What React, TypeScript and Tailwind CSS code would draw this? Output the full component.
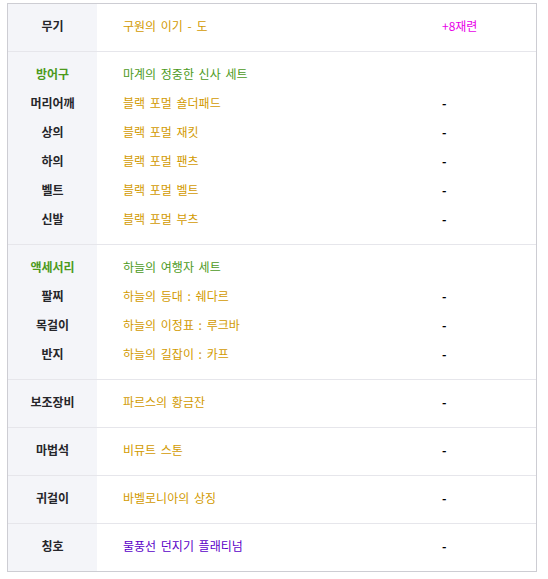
const GOLD = 'text-[#d29a00]';
const GREEN = 'text-[#4c9a1c]';

type Line = { label: string; labelClass?: string; item: string; itemClass: string; extra?: string; extraClass?: string };

const groups: Line[][] = [
  [{ label: '무기', item: '구원의 이기 - 도', itemClass: GOLD, extra: '+8재련', extraClass: 'text-[#e800e8]' }],
  [
    { label: '방어구', labelClass: GREEN, item: '마계의 정중한 신사 세트', itemClass: GREEN },
    { label: '머리어깨', item: '블랙 포멀 숄더패드', itemClass: GOLD, extra: '-' },
    { label: '상의', item: '블랙 포멀 재킷', itemClass: GOLD, extra: '-' },
    { label: '하의', item: '블랙 포멀 팬츠', itemClass: GOLD, extra: '-' },
    { label: '벨트', item: '블랙 포멀 벨트', itemClass: GOLD, extra: '-' },
    { label: '신발', item: '블랙 포멀 부츠', itemClass: GOLD, extra: '-' },
  ],
  [
    { label: '액세서리', labelClass: GREEN, item: '하늘의 여행자 세트', itemClass: GREEN },
    { label: '팔찌', item: '하늘의 등대 : 쉐다르', itemClass: GOLD, extra: '-' },
    { label: '목걸이', item: '하늘의 이정표 : 루크바', itemClass: GOLD, extra: '-' },
    { label: '반지', item: '하늘의 길잡이 : 카프', itemClass: GOLD, extra: '-' },
  ],
  [{ label: '보조장비', item: '파르스의 황금잔', itemClass: GOLD, extra: '-' }],
  [{ label: '마법석', item: '비뮤트 스톤', itemClass: GOLD, extra: '-' }],
  [{ label: '귀걸이', item: '바벨로니아의 상징', itemClass: GOLD, extra: '-' }],
  [{ label: '칭호', item: '물풍선 던지기 플래티넘', itemClass: 'text-[#5a00c8]', extra: '-' }],
];

export default function App() {
  return (
    <div className="bg-white min-h-screen pl-[7px] pt-[3px] text-[12px] leading-[29px] [font-family:'Noto_Sans_CJK_KR','Noto_Sans',sans-serif] [word-spacing:2px]">
      <div className="w-[530px] border border-[#cdcdd3]">
        {groups.map((g, gi) => (
          <div key={gi} className={`flex ${gi < groups.length - 1 ? 'border-b border-[#e6e6eb]' : ''}`}>
            <div className="w-[89px] shrink-0 bg-[#f4f5f9] pt-[7px] pb-[11px]">
              {g.map((l, i) => (
                <div key={i} className={`h-[29px] text-center font-bold ${l.labelClass ?? 'text-[#26262a]'}`}>
                  {l.label}
                </div>
              ))}
            </div>
            <div className="flex-1 pt-[7px] pb-[11px]">
              {g.map((l, i) => (
                <div key={i} className="flex h-[29px]">
                  <div className={`w-[345px] shrink-0 pl-[26px] ${l.itemClass}`}>{l.item}</div>
                  <div className={`flex-1 ${l.extraClass ?? 'text-black font-bold'}`}>{l.extra ?? ''}</div>
                </div>
              ))}
            </div>
          </div>
        ))}
      </div>
    </div>
  );
}
